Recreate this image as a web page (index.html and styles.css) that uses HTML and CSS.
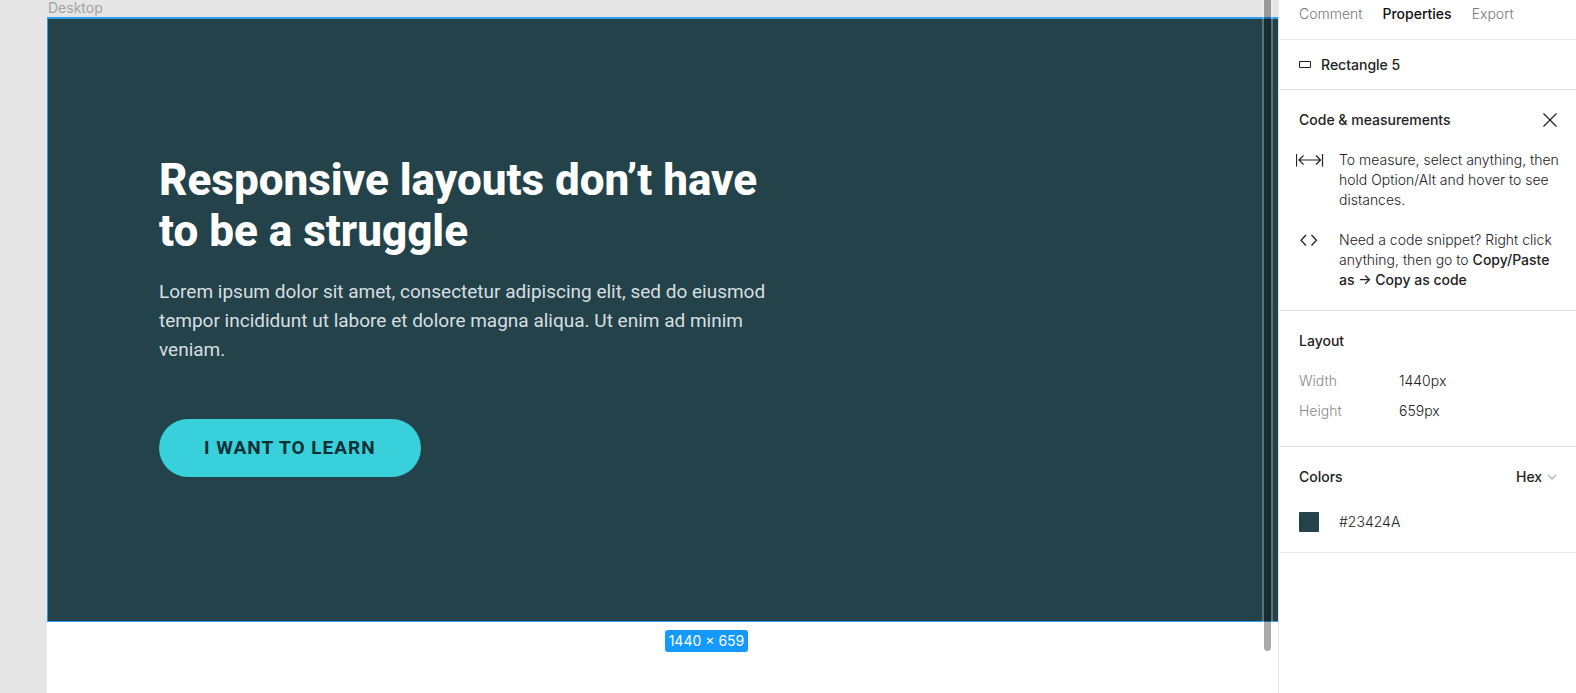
FILE: index.html
```html
<!DOCTYPE html>
<html lang="en">
<head>
<meta charset="utf-8">
<title>Responsive layouts</title>
<link rel="stylesheet" href="styles.css">
</head>
<body>
<div class="app">
  <main class="canvas">
    <div class="frame-label">Desktop</div>
    <div class="artboard">
      <section class="hero">
        <h1 class="hero-title">Responsive layouts don’t have to be a struggle</h1>
        <p class="hero-text">Lorem ipsum dolor sit amet, consectetur adipiscing elit, sed do eiusmod tempor incididunt ut labore et dolore magna aliqua. Ut enim ad minim veniam.</p>
        <button class="hero-button" type="button">I WANT TO LEARN</button>
      </section>
      <div class="size-row"><span class="size-badge">1440 × 659</span></div>
    </div>
    <div class="scrollbar"></div>
  </main>
  <aside class="panel">
    <nav class="tabs">
      <button class="tab" type="button">Comment</button>
      <button class="tab tab-active" type="button">Properties</button>
      <button class="tab" type="button">Export</button>
    </nav>
    <div class="layer">
      <svg class="layer-icon" width="12" height="8" viewBox="0 0 12 8" fill="none" stroke="#222"><path d="M.5 .5h11v6H.5z"/></svg>
      <span>Rectangle 5</span>
    </div>
    <section class="section">
      <div class="section-head">
        <h2 class="section-title">Code &amp; measurements</h2>
        <button class="close" type="button" aria-label="Close">
          <svg width="14" height="14" viewBox="0 0 14 14" fill="none" stroke="#222" stroke-width="1.200"><path d="M.5.5l13 13M13.500.5l-13 13"/></svg>
        </button>
      </div>
      <div class="tip">
        <svg class="tip-icon" width="28" height="20" viewBox="0 0 28 20" fill="none" stroke="#222" stroke-width="1.200"><path d="M.5 4v12.500M26.500 4v12.500M3 10h21.500M7.500 5.500L3 10l4.500 4.500M20 5.500l4.500 4.500-4.500 4.500"/></svg>
        <p class="tip-text">To measure, select anything, then hold Option/Alt and hover to see distances.</p>
      </div>
      <div class="tip">
        <svg class="tip-icon" width="28" height="20" viewBox="0 0 28 20" fill="none" stroke="#222" stroke-width="1.300"><path d="M10 5L5 10.300l5 5.200M15.500 5l5 5.300-5 5.200"/></svg>
        <p class="tip-text">Need a code snippet? Right click anything, then go to <strong>Copy/Paste as → Copy as code</strong></p>
      </div>
    </section>
    <section class="section section-layout">
      <h2 class="section-title">Layout</h2>
      <dl class="props">
        <dt>Width</dt><dd>1440px</dd>
        <dt>Height</dt><dd>659px</dd>
      </dl>
    </section>
    <section class="section section-colors">
      <div class="section-head">
        <h2 class="section-title">Colors</h2>
        <div class="format">
          <select class="format-select" aria-label="Color format"><option>Hex</option></select>
          <svg width="10" height="6" viewBox="0 0 10 6" fill="none" stroke="#b3b3b3" stroke-width="1.300"><path d="M1 1l4 4 4-4"/></svg>
        </div>
      </div>
      <div class="color"><span class="swatch"></span><span>#23424A</span></div>
    </section>
  </aside>
</div>
</body>
</html>
```

FILE: styles.css
```css
* {
  box-sizing: border-box;
}

body {
  margin: 0;
  font: 300 14px/20px Inter, sans-serif;
  color: #222;
}

h1, h2, p, dl, dd {
  margin: 0;
}

button, select {
  padding: 0;
  border: 0;
  background: none;
  font: inherit;
  color: inherit;
}

.app {
  display: flex;
  min-height: 100vh;
}

.canvas {
  position: relative;
  flex: 1;
  min-width: 0;
  display: flex;
  flex-direction: column;
  padding-left: 47px;
  overflow: hidden;
  background: #e5e5e5;
}

.frame-label {
  height: 17px;
  padding-left: 1px;
  font-weight: 400;
  line-height: 16px;
  color: #a3a3a3;
}

.artboard {
  flex: 1;
  width: calc(100% + 88px);
  background: #fff;
}

.hero {
  padding: 136px 111px 144px;
  border: 2px solid #2f9ef0;
  border-left-width: 1px;
  border-bottom-width: 1px;
  background: #23424a;
  font-family: Roboto, sans-serif;
}

.hero-title {
  max-width: 620px;
  font-size: 44px;
  font-weight: 800;
  line-height: 51px;
  color: #fff;
}

.hero-text {
  max-width: 625px;
  margin-top: 20px;
  font-size: 19px;
  font-weight: 400;
  line-height: 29px;
  color: #d8dfe0;
}

.hero-button {
  margin-top: 55px;
  padding: 0 45px;
  border-radius: 29px;
  background: #38d0da;
  font-size: 19px;
  font-weight: 700;
  line-height: 58px;
  letter-spacing: 1px;
  color: #082f35;
}

.size-row {
  display: flex;
  justify-content: center;
  padding-top: 8px;
}

.size-badge {
  padding: 0 4px;
  border-radius: 3px;
  background: #1399ff;
  font-weight: 400;
  line-height: 22px;
  color: #fff;
}

.scrollbar {
  position: absolute;
  top: -12px;
  right: 5px;
  width: 11px;
  height: 665px;
  border: 2px solid rgba(255, 255, 255, 0.25);
  border-radius: 6px;
  background: rgba(0, 0, 0, 0.33);
  background-clip: padding-box;
}

.panel {
  width: 298px;
  border-left: 1px solid #e5e5e5;
  background: #fff;
}

.tabs {
  display: flex;
  gap: 20px;
  padding: 4px 20px 15px;
  border-bottom: 1px solid #e5e5e5;
}

.tab {
  color: #777;
}

.tab-active {
  font-weight: 500;
  color: #111;
}

.layer {
  display: flex;
  align-items: center;
  gap: 10px;
  padding: 15px 20px 14px;
  border-bottom: 1px solid #e5e5e5;
  font-weight: 500;
}

.section {
  display: flex;
  flex-direction: column;
  gap: 20px;
  padding: 20px 16px 20px 20px;
  border-bottom: 1px solid #e5e5e5;
}

.section-head {
  display: flex;
  justify-content: space-between;
  align-items: center;
  padding-right: 3px;
}

.section-title {
  font-size: 14px;
  font-weight: 500;
  line-height: 20px;
}

.close {
  display: flex;
}

.tip {
  display: flex;
  gap: 15px;
}

.tip-icon {
  flex: none;
  margin-left: -3px;
}

.tip-text {
  flex: 1;
}

.tip-text strong {
  font-weight: 500;
}

.section-layout {
  padding-bottom: 25px;
}

.props {
  display: grid;
  grid-template-columns: 100px 1fr;
  row-gap: 10px;
}

.props dt {
  color: #888;
}

.section-colors {
  gap: 25px;
}

.format {
  display: flex;
  align-items: center;
  gap: 4px;
}

.format-select {
  appearance: none;
  font-weight: 500;
}

.color {
  display: flex;
  gap: 20px;
}

.swatch {
  width: 20px;
  height: 20px;
  border-radius: 1px;
  background: #23424a;
}
```
